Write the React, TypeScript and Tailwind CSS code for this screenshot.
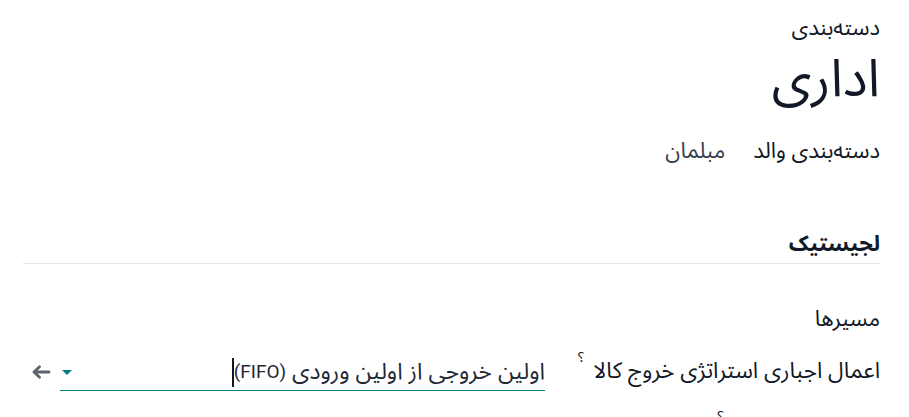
import React from "react";

export default function App() {
  return (
    <div
      dir="rtl"
      className="w-[909px] h-[417px] overflow-hidden bg-white text-[#111827]"
      style={{ fontFamily: '"Noto Sans Arabic", Roboto, sans-serif' }}
    >
      <div className="pr-[29px] pl-[23px] pt-[10px]">
        <div className="h-[36px] flex items-center text-[22px]">دسته‌بندی</div>
        <h1 className="h-[60px] flex items-center text-[52px] mt-[4px]">اداری</h1>
        <div className="h-[36px] flex items-center gap-[28px] mt-[23px] text-[22px]">
          <span>دسته‌بندی والد</span>
          <span className="text-[#374151]">مبلمان</span>
        </div>

        <div className="mt-[56px] h-[39px] flex items-center text-[22px] font-bold border-b border-[#e2e4e8]">
          لجیستیک
        </div>

        <div className="mt-[37px] h-[36px] flex items-center text-[22px]">مسیرها</div>

        <div className="flex items-center mt-[16px] h-[38px]">
          <div className="w-[335px] h-full flex items-center text-[22.5px]">
            <span>اعمال اجباری استراتژی خروج کالا</span>
            <span className="text-[14px] mr-[9px] self-start mt-[-6px]">؟</span>
          </div>
          <div className="flex items-center border-b border-[#017e84] w-[485px] h-[38px] pt-[2px]">
            <span className="text-[23px] text-[#1f2937]">اولین خروجی از اولین ورودی </span>
            <span dir="ltr" className="text-[19px] text-[#1f2937] mr-[6px]" style={{ fontFamily: "Roboto, sans-serif" }}>
              (FIFO)
            </span>
            <span className="w-[1.5px] h-[29px] bg-[#111827]" />
            <span className="mr-auto ml-[2px] w-0 h-0 border-l-[5px] border-r-[5px] border-t-[5px] border-l-transparent border-r-transparent border-t-[#017e84]" />
          </div>
          <div className="w-[37px] h-[38px] flex items-center justify-center text-[#5f636f]">
            <svg width="19" height="14" viewBox="0 0 19 14" fill="none">
              <path d="M2 7H17M2 7L7.5 1.8M2 7L7.5 12.2" stroke="currentColor" strokeWidth="2.8" strokeLinecap="round" strokeLinejoin="round" />
            </svg>
          </div>
        </div>

        <div className="flex items-center mt-[25px] h-[38px]">
          <div className="w-[335px] h-full flex items-center text-[22.5px]">
            <span>رزرو بسته‌بندی‌ها</span>
            <span className="text-[14px] mr-[9px] self-start mt-[-10px]">؟</span>
          </div>
        </div>
      </div>
    </div>
  );
}
